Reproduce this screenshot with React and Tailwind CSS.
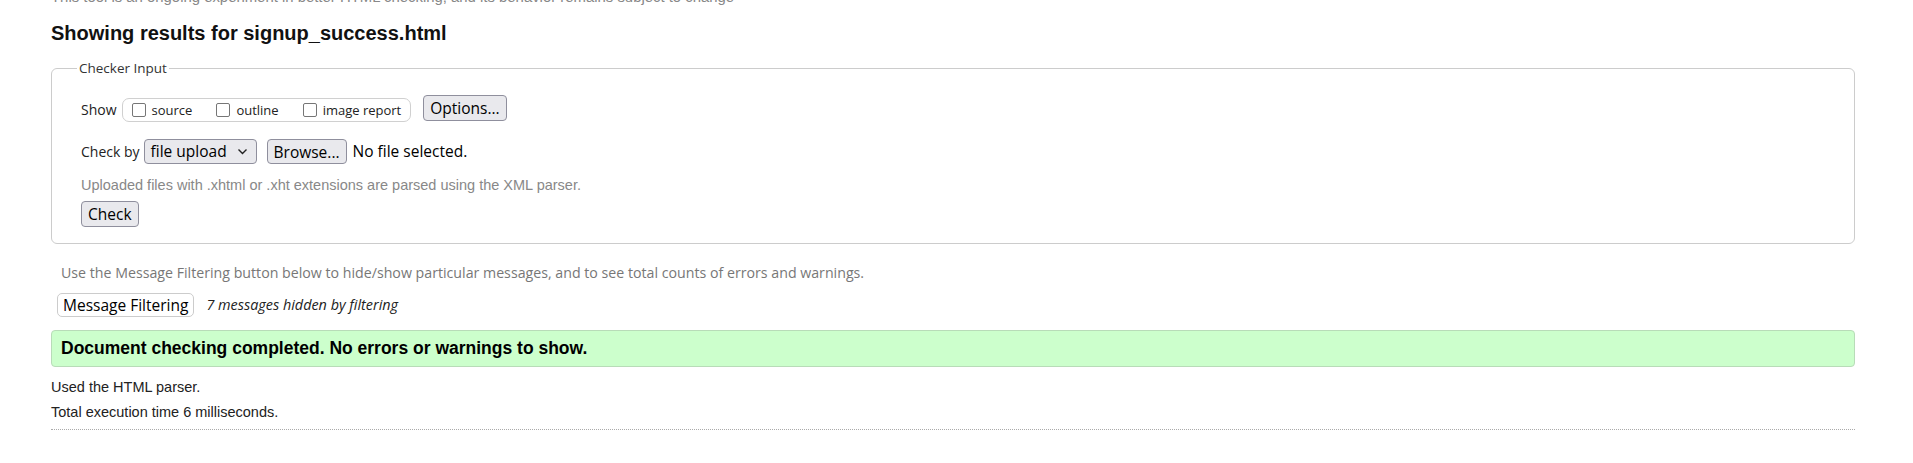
import React from "react";

const SANS = "font-['Open_Sans',sans-serif]";
const ARIAL = "font-['Liberation_Sans',Arial,sans-serif]";

function Box({ label }) {
  return (
    <label className="flex items-center whitespace-nowrap">
      <span className="w-[14px] h-[14px] border border-[#767676] rounded-[2px] bg-white" />
      <span className="ml-[6px] text-[13px] leading-[22px] text-[#222]">{label}</span>
    </label>
  );
}

function Btn({ children, className = "" }) {
  return (
    <button
      className={`flex items-center px-[6px] border border-[#8f8f9d] rounded-[4px] bg-[#e9e9ed] text-[15.5px] leading-[22px] text-black whitespace-nowrap ${className}`}
    >
      {children}
    </button>
  );
}

export default function App() {
  return (
    <div className={`bg-white min-h-[463px] overflow-hidden ${SANS}`}>
      <div className="ml-[51px] w-[1804px]">
        <p className={`${ARIAL} -mt-[10px] text-[14.9px] leading-[14px] text-[#888] whitespace-nowrap`}>
          This tool is an ongoing experiment in better HTML checking, and its behavior remains subject to change
        </p>

        <h2 className={`${ARIAL} mt-[18px] text-[20px] leading-[23px] font-bold text-[#111]`}>
          Showing results for signup_success.html
        </h2>

        <fieldset className="mt-[14px] border border-[#ccc] rounded-[6px] px-[29px] pt-[18px] pb-[16px]">
          <legend className="-ml-[4px] px-[2px] text-[13.5px] leading-[18px] text-[#333]">Checker Input</legend>

          <div className="flex items-start h-[27px]">
            <span className="mt-[3px] text-[14px] leading-[24px] text-[#222]">Show</span>
            <div className="mt-[3px] ml-[5px] h-[24px] flex items-center gap-[24px] px-[9px] border border-[#d0d0d0] rounded-[7px]">
              <Box label="source" />
              <Box label="outline" />
              <Box label="image report" />
            </div>
            <Btn className="ml-[12px] h-[26px]">Options...</Btn>
          </div>

          <div className="mt-[17px] flex items-center h-[25px]">
            <span className="text-[14px] leading-[25px] text-[#222]">Check by</span>
            <div className="ml-[4px] h-[25px] w-[113px] flex items-center pl-[6px] pr-[8px] border border-[#8f8f9d] rounded-[4px] bg-[#e9e9ed] text-[15.5px] leading-[23px] text-black">
              <span>file upload</span>
              <svg className="ml-auto" width="11" height="7" viewBox="0 0 11 7" fill="none">
                <polyline points="1.5,1.5 5.5,5.5 9.5,1.5" stroke="#222" strokeWidth="1.4" />
              </svg>
            </div>
            <Btn className="ml-[10px] h-[25px]">Browse...</Btn>
            <span className="ml-[6px] text-[15.5px] leading-[25px] text-black">No file selected.</span>
          </div>

          <p className={`${ARIAL} mt-[13px] text-[14.5px] leading-[16px] text-[#888]`}>
            Uploaded files with .xhtml or .xht extensions are parsed using the XML parser.
          </p>

          <Btn className="mt-[8px] h-[26px]">Check</Btn>
        </fieldset>

        <p className="mt-[20px] ml-[10px] text-[14.2px] leading-[18px] text-[#777]">
          Use the Message Filtering button below to hide/show particular messages, and to see total counts of errors and warnings.
        </p>

        <div className="mt-[11px] flex items-center h-[24px]">
          <button className="ml-[6px] h-[24px] px-[5px] border border-[#ccc] rounded-[5px] bg-white text-[15.5px] leading-[22px] text-black">
            Message Filtering
          </button>
          <span className="ml-[12px] text-[14.4px] italic leading-[24px] text-[#222]">7 messages hidden by filtering</span>
        </div>

        <div className={`${ARIAL} mt-[13px] h-[37px] border border-[#b8dcb8] rounded-[4px] bg-[#ccffcc] pl-[9px] text-[17.5px] leading-[35px] font-bold text-black`}>
          Document checking completed. No errors or warnings to show.
        </div>

        <p className={`${ARIAL} mt-[8px] text-[14.5px] leading-[25px] text-[#222]`}>Used the HTML parser.</p>
        <p className={`${ARIAL} text-[14.5px] leading-[24px] text-[#222]`}>Total execution time 6 milliseconds.</p>

        <div className="mt-[5px] border-t border-dotted border-[#aaa]" />
      </div>
    </div>
  );
}
